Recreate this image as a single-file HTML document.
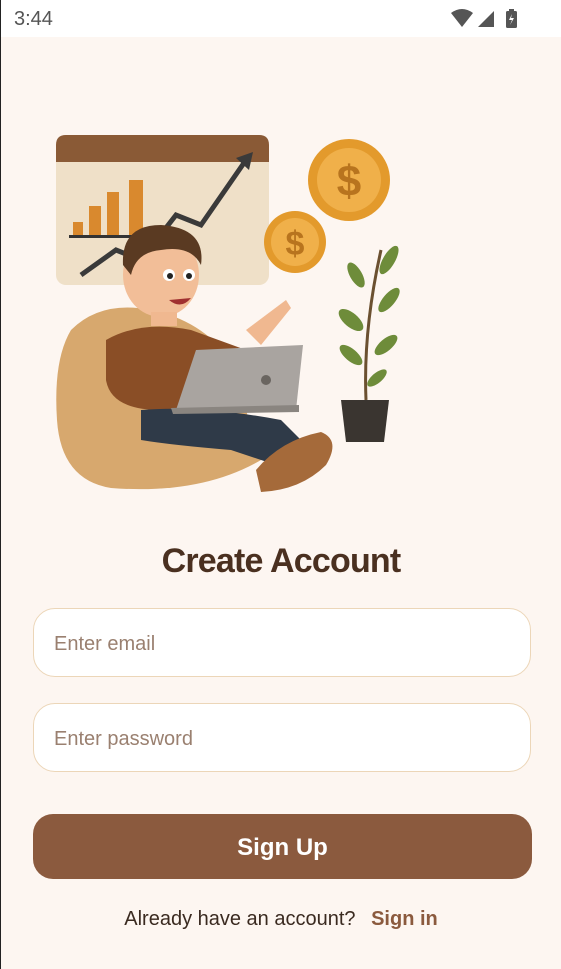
<!DOCTYPE html>
<html><head><style>
*{margin:0;padding:0;box-sizing:border-box}
body{width:561px;height:969px;overflow:hidden;background:#fdf6f1;font-family:"Liberation Sans",sans-serif;position:relative;border-left:1px solid #222}
.sb{position:absolute;left:0;top:0;width:561px;height:37px;background:#fff}
.time{position:absolute;left:13px;top:8px;font-size:20px;color:#555}
.title{position:absolute;top:542px;width:100%;text-align:center;font-size:34px;font-weight:bold;color:#4a3020;letter-spacing:-0.8px}
.inp{position:absolute;left:32px;width:498px;height:69px;border:1.5px solid #ecd6b8;border-radius:22px;background:#fff;font-size:20px;color:#9a8070;padding:24px 0 0 20px}
.btn{position:absolute;left:32px;top:814px;width:499px;height:65px;border-radius:20px;background:#8b5a3e;color:#fff;font-weight:bold;font-size:24px;text-align:center;line-height:67px}
.ft{position:absolute;top:908px;width:100%;text-align:center;font-size:20px;color:#3a2a20}
.ft b{color:#8b5a3e;margin-left:10px}
</style></head><body>
<div class="sb"><span class="time">3:44</span>
<svg style="position:absolute;left:448px;top:8px" width="75" height="22" viewBox="0 0 75 22"><path d="M2 5 Q13 -3 24 5 L13 19Z" fill="#555"/><path d="M29 19 L45 3 L45 19Z" fill="#555"/><rect x="57" y="3" width="11" height="17" rx="1.5" fill="#555"/><rect x="60" y="1" width="5" height="3" fill="#555"/><path d="M63 6 L60 12 L63 12 L61 17 L65 10 L62 10Z" fill="#fff"/></svg>
</div>
<svg style="position:absolute;left:0;top:120px" width="561" height="390" viewBox="0 120 561 390">
<rect x="55" y="135" width="213" height="150" rx="10" fill="#efe0c8"/>
<path d="M55 145 Q55 135 65 135 L258 135 Q268 135 268 145 L268 162 L55 162Z" fill="#8a5a36"/>
<rect x="72" y="222" width="10" height="14" fill="#d9892e"/><rect x="88" y="206" width="12" height="30" fill="#d9892e"/><rect x="106" y="192" width="12" height="44" fill="#d9892e"/><rect x="128" y="180" width="14" height="56" fill="#d9892e"/>
<rect x="68" y="235" width="80" height="3" fill="#333"/>
<path d="M80 275 L115 250 L140 260 L175 215 L200 225 L245 160" stroke="#3a3a3a" stroke-width="5" fill="none"/><path d="M235 158 L252 152 L248 170Z" fill="#3a3a3a"/>
<circle cx="348" cy="180" r="41" fill="#e39a2c"/><circle cx="348" cy="180" r="32" fill="#f0b04a"/><text x="348" y="196" font-size="44" font-weight="bold" fill="#b8741e" text-anchor="middle" font-family="Liberation Sans">$</text>
<circle cx="294" cy="242" r="31" fill="#e39a2c"/><circle cx="294" cy="242" r="24" fill="#f0b04a"/><text x="294" y="255" font-size="34" font-weight="bold" fill="#b8741e" text-anchor="middle" font-family="Liberation Sans">$</text>
<path d="M365 400 Q362 330 380 250" stroke="#6b5030" stroke-width="3" fill="none"/>
<g fill="#6e8c3a"><ellipse cx="355" cy="275" rx="6" ry="14" transform="rotate(-30 355 275)"/><ellipse cx="388" cy="260" rx="6" ry="16" transform="rotate(30 388 260)"/><ellipse cx="350" cy="320" rx="7" ry="15" transform="rotate(-50 350 320)"/><ellipse cx="388" cy="300" rx="6" ry="15" transform="rotate(40 388 300)"/><ellipse cx="350" cy="355" rx="6" ry="14" transform="rotate(-50 350 355)"/><ellipse cx="385" cy="345" rx="6" ry="14" transform="rotate(50 385 345)"/><ellipse cx="376" cy="378" rx="5" ry="12" transform="rotate(50 376 378)"/></g>
<path d="M340 400 L388 400 L383 442 L345 442Z" fill="#3a3530"/>
<path d="M70 330 Q100 300 150 310 Q200 320 230 360 L260 460 Q200 495 110 488 Q60 480 56 420 Q52 360 70 330Z" fill="#d7a86e"/>
<path d="M105 340 Q140 320 190 330 L245 350 L245 400 L160 410 Q110 410 105 380Z" fill="#8a4e26"/>
<path d="M140 410 Q200 405 280 420 L310 450 L290 470 L230 450 Q170 445 140 440Z" fill="#2f3a48"/>
<path d="M255 470 Q280 440 320 432 Q340 440 325 465 Q300 490 260 492Z" fill="#a56a3a"/>
<path d="M175 410 L295 410 L302 345 L195 350Z" fill="#a9a4a0"/><path d="M170 408 L298 405 L298 412 L172 414Z" fill="#8a8580"/>
<circle cx="265" cy="380" r="5" fill="#6a6560"/>
<path d="M245 330 L285 300 L290 308 L260 345Z" fill="#f0b890"/>
<ellipse cx="160" cy="275" rx="38" ry="42" fill="#f2be98"/>
<path d="M122 265 Q120 225 160 225 Q205 228 200 265 Q190 245 160 250 Q135 252 130 275Z" fill="#5a3a22"/>
<circle cx="168" cy="275" r="6" fill="#fff"/><circle cx="188" cy="275" r="6" fill="#fff"/><circle cx="169" cy="276" r="3" fill="#222"/><circle cx="188" cy="276" r="3" fill="#222"/>
<path d="M168 300 Q180 310 190 298" fill="#a03030"/>
<rect x="150" y="312" width="26" height="14" fill="#f0b890"/>
</svg>
<div class="title">Create Account</div>
<div class="inp" style="top:608px">Enter email</div>
<div class="inp" style="top:703px">Enter password</div>
<div class="btn">Sign Up</div>
<div class="ft">Already have an account? <b>Sign in</b></div>
</body></html>
